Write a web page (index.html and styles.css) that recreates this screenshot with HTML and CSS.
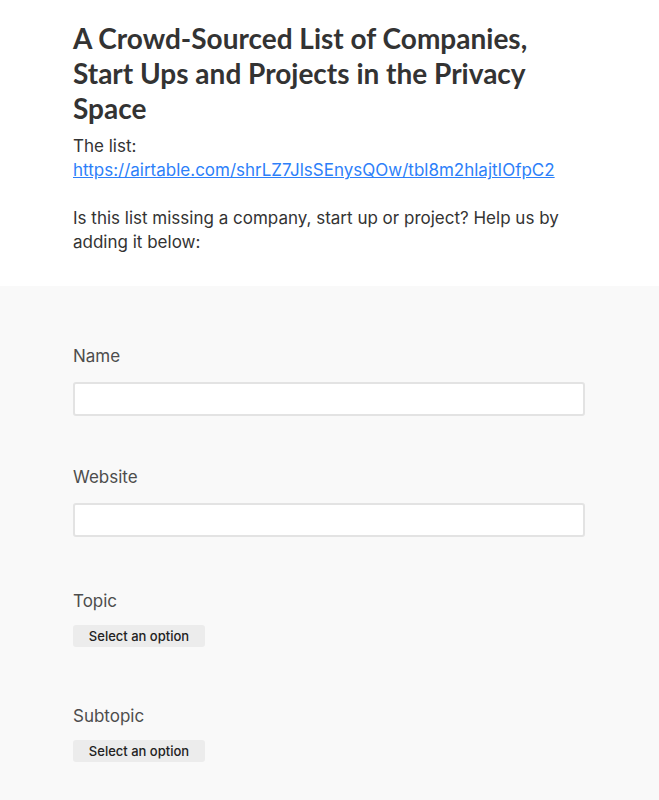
FILE: index.html
```html
<!DOCTYPE html>
<html>
<head>
<meta charset="utf-8">
<link rel="stylesheet" href="styles.css">
</head>
<body>
<header class="intro">
  <div class="wrap">
    <h1 class="title">A Crowd-Sourced List of Companies, Start Ups and Projects in the Privacy Space</h1>
    <p class="desc">The list:<br><a class="link" href="#">https://airtable.com/shrLZ7JlsSEnysQOw/tbl8m2hlajtIOfpC2</a></p>
    <p class="desc">Is this list missing a company, start up or project? Help us by adding it below:</p>
  </div>
</header>
<main class="form-area">
  <div class="wrap">
    <div class="field">
      <div class="label">Name</div>
      <input class="input" type="text">
    </div>
    <div class="field">
      <div class="label">Website</div>
      <input class="input" type="text">
    </div>
    <div class="field field-select">
      <div class="label">Topic</div>
      <button class="select">Select an option</button>
    </div>
    <div class="field field-select">
      <div class="label">Subtopic</div>
      <button class="select">Select an option</button>
    </div>
  </div>
</main>
</body>
</html>
```
FILE: styles.css
```css
html, body {
  margin: 0;
  padding: 0;
  background: #ffffff;
}
body {
  font-family: Inter, "Liberation Sans", Arial, sans-serif;
  color: #333333;
}
.wrap {
  width: 513px;
  margin: 0 auto;
}
.intro {
  padding-top: 21px;
  padding-bottom: 32px;
}
.title {
  font-family: Lato, "Liberation Sans", sans-serif;
  font-weight: 700;
  font-size: 28px;
  line-height: 35px;
  color: #333333;
  margin: 0 0 8px 0;
}
.desc {
  font-size: 17px;
  line-height: 24px;
  margin: 0 0 24px 0;
  color: #333333;
}
.desc:last-child {
  margin-bottom: 0;
}
.link {
  color: #2d7ff9;
  text-decoration: underline;
}
.form-area {
  background: #f9f9f9;
  padding-top: 58px;
  padding-bottom: 40px;
}
.field {
  margin-bottom: 49px;
}
.field-select {
  padding-top: 3px;
  margin-bottom: 54px;
}
.label {
  font-size: 17px;
  line-height: 24px;
  color: #4d4d4d;
  margin-bottom: 14px;
}
.input {
  display: block;
  box-sizing: border-box;
  width: 512px;
  height: 34px;
  margin: 0;
  border: 2px solid #e3e3e3;
  border-radius: 3px;
  background: #ffffff;
  padding: 0 8px;
}
.select {
  display: block;
  box-sizing: border-box;
  width: 132px;
  height: 22px;
  margin: 12px 0 0 0;
  padding: 0;
  border: none;
  border-radius: 3px;
  background: #ececec;
  font-family: Inter, "Liberation Sans", Arial, sans-serif;
  font-size: 13px;
  font-weight: 500;
  color: #222222;
}
.field-select .label {
  margin-bottom: 0;
}
```
